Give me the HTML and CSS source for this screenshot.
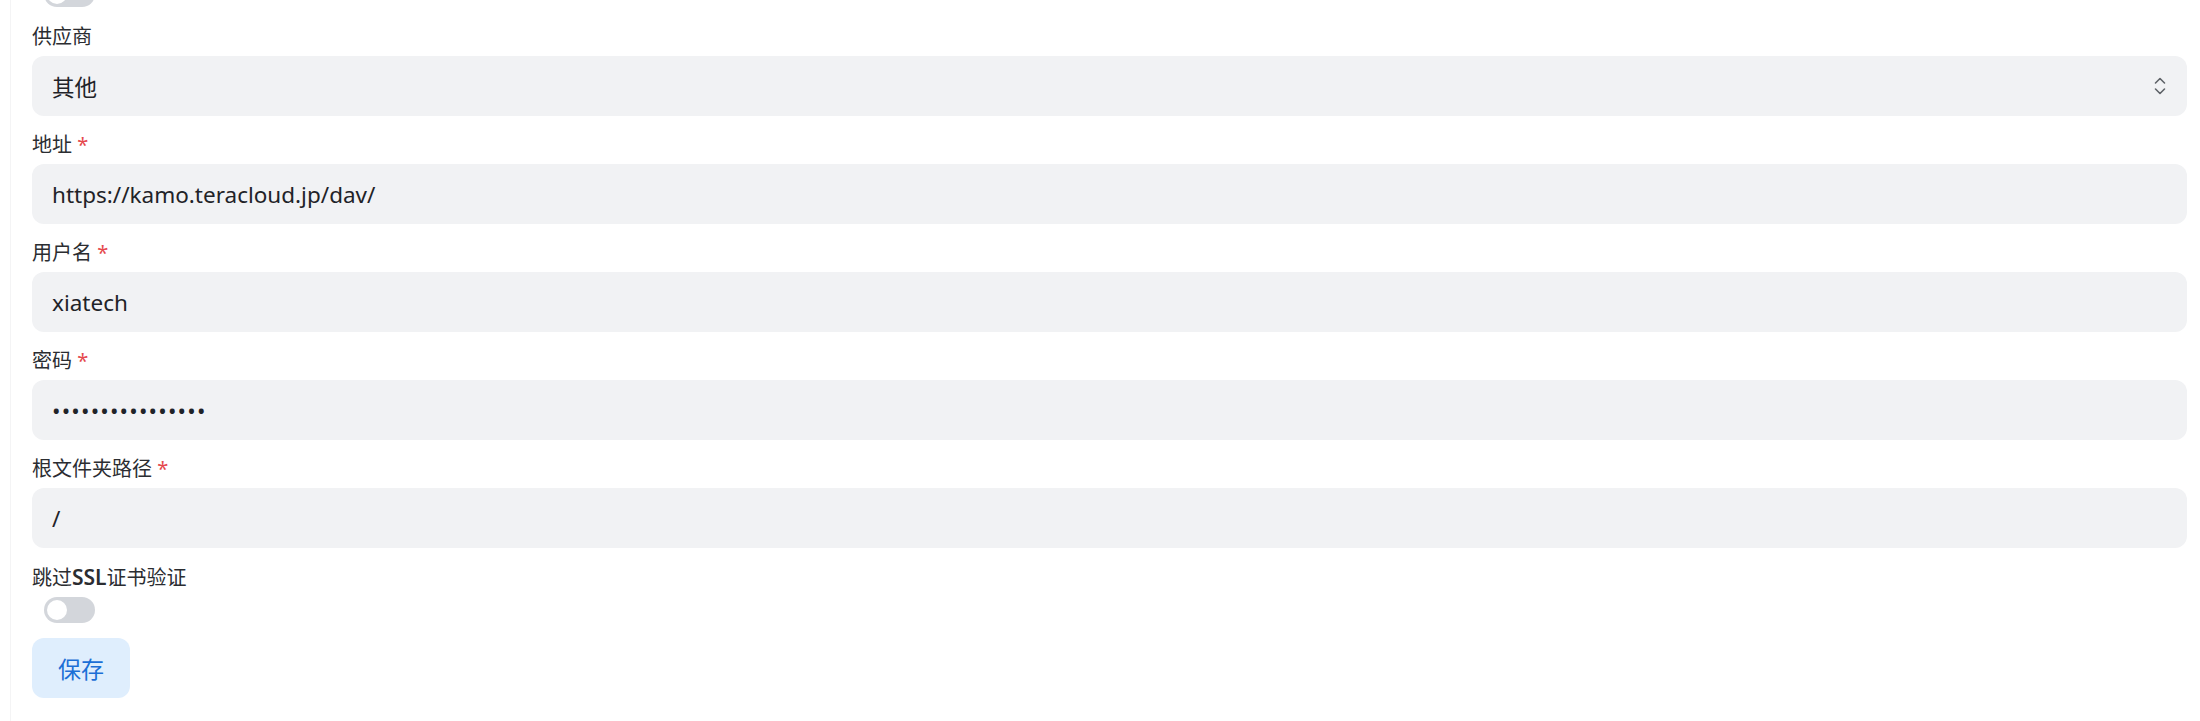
FILE: index.html
```html
<!DOCTYPE html>
<html lang="zh-CN">
<head>
    <meta charset="UTF-8">
    <meta name="viewport" content="width=device-width, initial-scale=1.0">
    <title>WebDAV 设置</title>
    <link rel="stylesheet" href="styles.css">
</head>
<body>

    <div class="panel">
        <form class="form" onsubmit="return false">
            <div class="switch-row top">
                <span class="switch"><span class="knob"></span></span>
            </div>

            <div class="field">
                <label>供应商</label>
                <div class="select">
                    <span>其他</span>
                    <svg width="12" height="18" viewBox="0 0 12 18">
                        <polyline points="1.5,6 6,1.5 10.5,6" fill="none" stroke="#5f6368" stroke-width="1.6" stroke-linecap="round" stroke-linejoin="round"/>
                        <polyline points="1.5,12 6,16.5 10.5,12" fill="none" stroke="#5f6368" stroke-width="1.6" stroke-linecap="round" stroke-linejoin="round"/>
                    </svg>
                </div>
            </div>

            <div class="field">
                <label>地址 <span class="req">*</span></label>
                <input class="input" type="text" value="https://kamo.teracloud.jp/dav/" readonly>
            </div>

            <div class="field">
                <label>用户名 <span class="req">*</span></label>
                <input class="input" type="text" value="xiatech" readonly>
            </div>

            <div class="field">
                <label>密码 <span class="req">*</span></label>
                <input class="input pass" type="password" value="abcdefghijklmnop" readonly>
            </div>

            <div class="field">
                <label>根文件夹路径 <span class="req">*</span></label>
                <input class="input" type="text" value="/" readonly>
            </div>

            <div class="field last">
                <label>跳过<b>SSL</b>证书验证</label>
                <div class="switch-row">
                    <span class="switch"><span class="knob"></span></span>
                </div>
            </div>

            <button class="save" type="button">保存</button>
        </form>
    </div>

</body>
</html>
```

FILE: styles.css
```css
*, *::after, *::before{
    margin: 0;
    padding: 0;
    box-sizing: border-box;
}
:root {
    --txt: #2b2d31;
    --inp-bg: #f1f2f4;
    --req: #e5484d;
    --btn-bg: #dfeefd;
    --btn-txt: #1c6fd6;
}

body{
    background-color: #ffffff;
    font-family: "Noto Sans", "Noto Sans CJK SC", sans-serif;
    color: var(--txt);
    padding: 0 13px 0 10px;
    height: 100vh;
    overflow: hidden;
}
.panel{
    display: flex;
    flex-direction: column;
    border-left: 1px solid #f4f4f5;
    padding-left: 21px;
    height: 100%;
}
.form{
    margin-top: -19px;
    display: flex;
    flex-direction: column;
}

.field{
    display: flex;
    flex-direction: column;
    gap: 4px;
    margin-bottom: 14px;
}
.field.last{
    margin-bottom: 15px;
}
.field label{
    font-size: 20px;
    line-height: 30px;
    color: var(--txt);
}
.field label b{
    font-weight: 600;
    font-size: 21px;
}
.req{
    color: var(--req);
}

.input, .select{
    height: 60px;
    width: 100%;
    border: none;
    outline: none;
    border-radius: 12px;
    background-color: var(--inp-bg);
    padding: 0 20px;
    font-family: "Noto Sans", "Noto Sans CJK SC", sans-serif;
    font-size: 22.5px;
    color: #1f2328;
}
.select{
    display: flex;
    align-items: center;
    justify-content: space-between;
    padding-right: 21px;
}
.pass{
    letter-spacing: 1.2px;
}

.switch-row{
    display: flex;
    padding-left: 12px;
}
.switch-row.top{
    margin-bottom: 15px;
}
.switch{
    width: 51px;
    height: 26px;
    border-radius: 13px;
    background-color: #d3d6db;
    display: flex;
    align-items: center;
    padding-left: 3px;
}
.knob{
    width: 20px;
    height: 20px;
    border-radius: 50%;
    background-color: #ffffff;
}

.save{
    align-self: flex-start;
    height: 60px;
    width: 98px;
    border: none;
    border-radius: 12px;
    background-color: var(--btn-bg);
    color: var(--btn-txt);
    font-family: "Noto Sans CJK SC", sans-serif;
    font-size: 23px;
    cursor: pointer;
}
```
